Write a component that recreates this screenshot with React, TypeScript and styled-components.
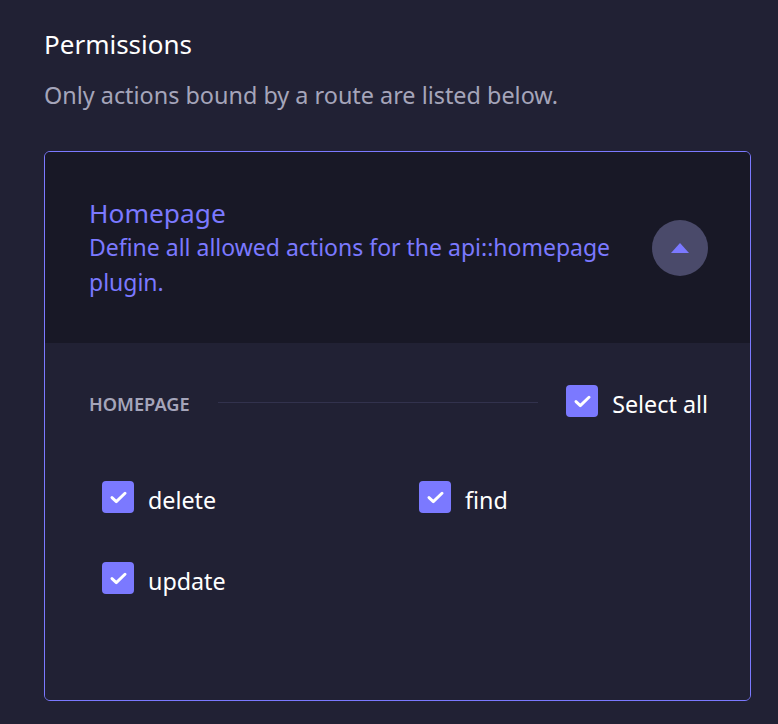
import React from "react";
import styled, { createGlobalStyle } from "styled-components";

const Global = createGlobalStyle`
  html, body { margin: 0; padding: 0; background: #212134; }
  body { font-family: "Noto Sans", "Open Sans", sans-serif; -webkit-font-smoothing: antialiased; }
  * { box-sizing: border-box; }
`;

const Page = styled.div`
  padding: 26px 27px 23px 44px;
  min-height: 724px;
  background: #212134;
`;

const Title = styled.h2`
  margin: 0;
  font-size: 26px;
  font-weight: 400;
  line-height: 36px;
  color: #ffffff;
`;

const Subtitle = styled.p`
  margin: 17px 0 0;
  font-size: 23.4px;
  line-height: 32px;
  color: #a5a5ba;
`;

const Card = styled.section`
  margin-top: 40px;
  height: 550px;
  border: 1px solid #7b79ff;
  border-radius: 6px;
  overflow: hidden;
  display: flex;
  flex-direction: column;
`;

const Header = styled.div`
  height: 191px;
  flex: none;
  background: #181826;
  display: flex;
  align-items: center;
  justify-content: space-between;
  padding: 0 42px 0 44px;
`;

const HeaderText = styled.div`
  max-width: 545px;
  color: #7b79ff;
`;

const HeaderTitle = styled.div`
  font-size: 26.3px;
  line-height: 34px;
`;

const HeaderDesc = styled.div`
  font-size: 23px;
  line-height: 35px;
`;

const ToggleButton = styled.button`
  width: 56px;
  height: 56px;
  border-radius: 50%;
  border: none;
  background: #4a4a6a;
  display: flex;
  align-items: center;
  justify-content: center;
  padding: 0;
  cursor: pointer;
`;

const Body = styled.div`
  flex: 1;
  background: #212134;
  padding: 42px 42px 0 44px;
`;

const SectionRow = styled.div`
  display: flex;
  align-items: center;
`;

const SectionLabel = styled.span`
  font-size: 18.2px;
  font-weight: 600;
  line-height: 26px;
  padding-top: 6px;
  color: #a5a5ba;
`;

const Rule = styled.div`
  flex: 1;
  height: 1px;
  background: #32324d;
  margin: 3px 28px 0;
`;

const CheckRow = styled.label`
  display: flex;
  align-items: center;
  gap: 14px;
  font-size: 23.3px;
  color: #ffffff;
`;

const CheckText = styled.span`
  line-height: 26px;
  padding-top: 6px;
`;

const Box = styled.span`
  width: 32px;
  height: 32px;
  border-radius: 4px;
  background: #7b79ff;
  display: flex;
  align-items: center;
  justify-content: center;
  flex: none;
`;

const Grid = styled.div`
  display: grid;
  grid-template-columns: 317px 1fr;
  row-gap: 49px;
  padding: 64px 0 0 13px;
`;

const Check = () => (
  <Box>
    <svg width="17" height="13" viewBox="0 0 17 13" fill="none">
      <path d="M2 6.6 L6.3 10.6 L15 2.2" stroke="#ffffff" strokeWidth="2.9" strokeLinecap="round" strokeLinejoin="round" />
    </svg>
  </Box>
);

const actions = ["delete", "find", "update"];

export default function App() {
  return (
    <Page>
      <Global />
      <Title>Permissions</Title>
      <Subtitle>Only actions bound by a route are listed below.</Subtitle>
      <Card>
        <Header>
          <HeaderText>
            <HeaderTitle>Homepage</HeaderTitle>
            <HeaderDesc>Define all allowed actions for the api::homepage plugin.</HeaderDesc>
          </HeaderText>
          <ToggleButton aria-label="collapse">
            <svg width="20" height="12" viewBox="0 0 20 12">
              <path d="M10 1 L19 11 L1 11 Z" fill="#7b79ff" />
            </svg>
          </ToggleButton>
        </Header>
        <Body>
          <SectionRow>
            <SectionLabel>HOMEPAGE</SectionLabel>
            <Rule />
            <CheckRow>
              <Check />
              <CheckText>Select all</CheckText>
            </CheckRow>
          </SectionRow>
          <Grid>
            {actions.map((a) => (
              <CheckRow key={a}>
                <Check />
                <CheckText>{a}</CheckText>
              </CheckRow>
            ))}
          </Grid>
        </Body>
      </Card>
    </Page>
  );
}
